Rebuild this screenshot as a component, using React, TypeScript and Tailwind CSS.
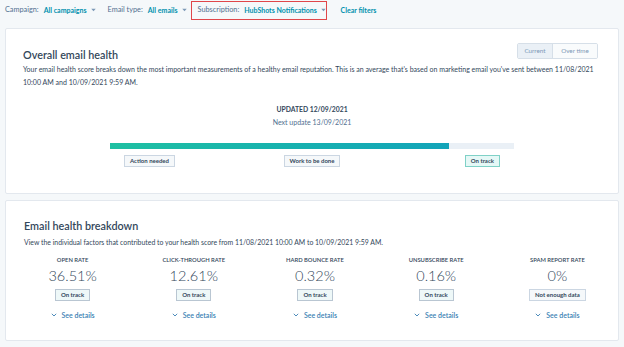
import React from 'react';

interface Metric {
  label: string;
  value: string;
  status: 'track' | 'nodata';
}

const metrics: Metric[] = [
  { label: 'Open rate', value: '36.51%', status: 'track' },
  { label: 'Click-through rate', value: '12.61%', status: 'track' },
  { label: 'Hard bounce rate', value: '0.32%', status: 'track' },
  { label: 'Unsubscribe rate', value: '0.16%', status: 'track' },
  { label: 'Spam report rate', value: '0%', status: 'nodata' },
];

const Caret = () => (
  <svg width="5" height="4" viewBox="0 0 5 4" className="ml-[4px] inline-block">
    <path d="M0.3 0.8 L2.5 3.2 L4.7 0.8 Z" fill="#7c98b6" />
  </svg>
);

const Filter = ({ label, value }: { label: string; value: string }) => (
  <div className="flex items-center whitespace-nowrap">
    <span className="text-[7.3px] text-[#516f90]">{label}</span>
    <span className="ml-[5px] font-bold text-[#0091ae]">{value}</span>
    <Caret />
  </div>
);

const Badge = ({ children, tone }: { children: React.ReactNode; tone: 'gray' | 'teal' | 'soft' }) => {
  const styles = {
    gray: 'border-[#cbd6e2] bg-[#f5f8fa]',
    teal: 'border-[#7fd1c7] bg-[#e5f8f6]',
    soft: 'border-[#b9c6d2] bg-[#eef8f8]',
  };
  return (
    <span
      className={`flex h-[12px] items-center whitespace-nowrap border px-[5px] text-[6px] font-bold leading-none text-[#33475b] ${styles[tone]}`}
    >
      {children}
    </span>
  );
};

const App: React.FC = () => {
  return (
    <div
      className="h-[347px] w-[624px] overflow-hidden bg-[#f5f8fa] text-[#33475b]"
      style={{ fontFamily: 'Lato, "Open Sans", Arial, sans-serif' }}
    >
      {/* filter bar */}
      <div className="flex h-[20px] items-center pl-[5px] text-[7px]">
        <Filter label="Campaign:" value="All campaigns" />
        <div className="ml-[12px]">
          <Filter label="Email type:" value="All emails" />
        </div>
        <div className="ml-[4px] flex h-[19px] w-[136px] items-center border-[1.5px] border-[#e0464a] pl-[6px]">
          <Filter label="Subscription:" value="HubShots Notifications" />
        </div>
        <span className="ml-[14px] whitespace-nowrap font-bold text-[#0091ae]">Clear filters</span>
      </div>

      {/* overall email health */}
      <div className="mx-[5px] mt-[8px] h-[166px] rounded-[2px] border border-[#e3e8ee] bg-white px-[17px] pt-[14px]">
        <div className="flex items-start justify-between">
          <h2 className="pt-[5px] text-[10.8px] font-semibold leading-[13px]">Overall email health</h2>
          <div className="mr-[3px] flex h-[16px] overflow-hidden rounded-[2px] border border-[#d6dfe8] text-[6.3px] text-[#7c98b6]">
            <span className="flex w-[34px] items-center justify-center bg-[#eaf0f6]">Current</span>
            <span className="flex w-[45px] items-center justify-center border-l border-[#d6dfe8] bg-[#f9fbfc]">
              Over time
            </span>
          </div>
        </div>
        <p className="mt-[2px] text-[7px] leading-[13px]">
          Your email health score breaks down the most important measurements of a healthy email reputation. This is an
          average that's based on marketing email you've sent between 11/08/2021 10:00 AM and 10/09/2021 9:59 AM.
        </p>
        <div className="mt-[14px] text-center text-[6.8px] leading-[13px]">
          <div className="font-bold">UPDATED 12/09/2021</div>
          <div className="text-[7px] text-[#516f90]">Next update 13/09/2021</div>
        </div>
        <div className="mx-auto mt-[14px] w-[404px]">
          <div className="h-[6px] w-full bg-[#eaf0f6]">
            <div className="h-full w-[339px] bg-gradient-to-r from-[#1fc0a2] to-[#13a4b9]" />
          </div>
          <div className="mt-[6px] grid grid-cols-3 px-[14px]">
            <div className="flex justify-self-start">
              <Badge tone="gray">Action needed</Badge>
            </div>
            <div className="flex justify-self-center">
              <Badge tone="gray">Work to be done</Badge>
            </div>
            <div className="flex justify-self-end">
              <Badge tone="teal">On track</Badge>
            </div>
          </div>
        </div>
      </div>

      {/* breakdown */}
      <div className="mx-[5px] mt-[6px] h-[141px] rounded-[2px] border border-[#e3e8ee] bg-white pt-[18px]">
        <div className="px-[18px]">
          <h2 className="text-[10.8px] font-semibold leading-[13px]">Email health breakdown</h2>
          <p className="mt-[4px] text-[6.9px] leading-[13px]">
            View the individual factors that contributed to your health score from 11/08/2021 10:00 AM to 10/09/2021
            9:59 AM.
          </p>
        </div>
        <div className="mt-[6px] grid grid-cols-5 pl-[6px]">
          {metrics.map((m) => (
            <div key={m.label} className="flex flex-col items-center">
              <span className="text-[5.8px] font-semibold uppercase leading-[10px] text-[#33475b]">{m.label}</span>
              <span className="mt-[1px] text-[14.5px] font-light leading-[20px]">{m.value}</span>
              <div className="mt-[3px] flex">
                <Badge tone={m.status === 'track' ? 'soft' : 'gray'}>
                  {m.status === 'track' ? 'On track' : 'Not enough data'}
                </Badge>
              </div>
              <div className="mt-[8px] flex items-center text-[7px] font-semibold leading-[12px] text-[#3a7fb3]">
                <svg width="6" height="4" viewBox="0 0 6 4" className="mr-[5px]">
                  <path d="M0.8 0.8 L3 3 L5.2 0.8" fill="none" stroke="#3a7fb3" strokeWidth="0.9" />
                </svg>
                See details
              </div>
            </div>
          ))}
        </div>
      </div>
    </div>
  );
};

export default App;
